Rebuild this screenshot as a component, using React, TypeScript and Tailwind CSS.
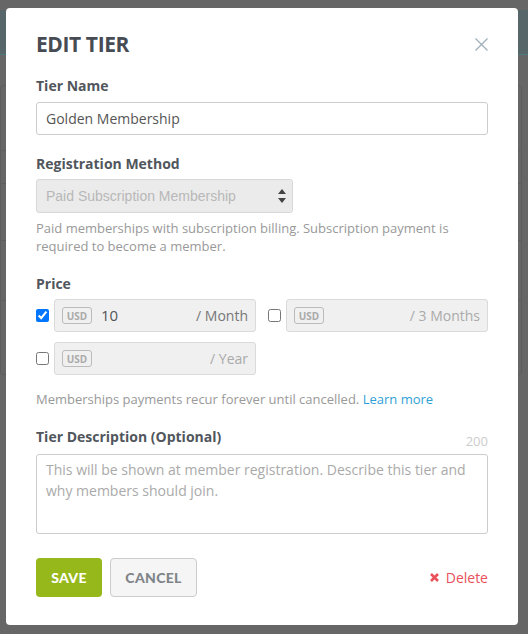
import React from "react";

function CloseIcon() {
  return (
    <svg width="13" height="13" viewBox="0 0 13 13" className="mt-[8px]">
      <path d="M0.5 0.5 L12.5 12.5 M12.5 0.5 L0.5 12.5" stroke="#9fb0ba" strokeWidth="1.3" fill="none" />
    </svg>
  );
}

function UpDown() {
  return (
    <svg width="8" height="14" viewBox="0 0 8 14">
      <path d="M4 0 L8 5 L0 5 Z" fill="#444" />
      <path d="M0 9 L8 9 L4 14 Z" fill="#444" />
    </svg>
  );
}

function PriceField({
  checked,
  value,
  unit,
  active,
}: {
  checked: boolean;
  value?: string;
  unit: string;
  active: boolean;
}) {
  return (
    <div className="flex items-center gap-[5px]">
      <input type="checkbox" defaultChecked={checked} className="m-0 h-[13px] w-[13px] shrink-0" />
      <div className="flex h-[33px] flex-1 items-center rounded-[3px] border border-[#dadada] bg-[#f0f0f0] pl-[7px] pr-[7px]">
        <div className="flex h-[17px] w-[30px] items-center justify-center rounded-[3px] border border-[#bbbbbb] text-[10px] font-bold leading-none text-[#aaaaaa]">
          USD
        </div>
        {value ? <span className="ml-[9px] text-[15px] text-[#555]">{value}</span> : null}
        <span className={"ml-auto text-[14px] " + (active ? "text-[#777]" : "text-[#aaaaaa]")}>{unit}</span>
      </div>
    </div>
  );
}

export default function App() {
  return (
    <div className="relative h-[634px] w-[528px] overflow-hidden bg-[#666666] font-['Open_Sans',sans-serif]">
      {/* page behind overlay */}
      <div className="pt-[10px]">
        <div className="h-[45px] border-b border-[#4f7980] bg-[#566669]" />
        <div className="mt-[30px] h-[290px] w-[522px] rounded-[3px] border border-[#5d5d5d]">
          <div className="h-[65px] border-b border-[#5d5d5d]" />
          <div className="h-[33px] border-b border-[#5d5d5d]" />
          <div className="h-[57px] border-b border-[#5d5d5d]" />
          <div className="h-[60px] border-b border-[#5d5d5d]" />
        </div>
      </div>

      {/* modal */}
      <div className="absolute left-[6px] top-[8px] h-[617px] w-[512px] rounded-[4px] bg-white px-[30px] pt-[22px]">
        <div className="flex items-start justify-between">
          <h2 className="text-[21px] font-bold leading-[28px] tracking-[-0.4px] text-[#474c54]">EDIT TIER</h2>
          <CloseIcon />
        </div>

        <div className="mt-[18px] text-[14px] font-bold leading-[20px] text-[#51565d]">Tier Name</div>
        <div className="mt-[6px] flex h-[33px] items-center rounded-[3px] border border-[#cccccc] px-[9px] text-[14px] text-[#555]">
          Golden Membership
        </div>

        <div className="mt-[19px] text-[14px] font-bold leading-[20px] text-[#51565d]">Registration Method</div>
        <div className="mt-[5px] flex h-[34px] w-[257px] items-center justify-between rounded-[3px] border border-[#d8d8d8] bg-[#ebebeb] pl-[9px] pr-[6px]">
          <span className="font-['Liberation_Sans',Arial,sans-serif] text-[14px] text-[#b8b8b8]">Paid Subscription Membership</span>
          <UpDown />
        </div>
        <p className="mt-[6px] text-[13px] leading-[18px] text-[#999999]">
          Paid memberships with subscription billing. Subscription payment is required to become a member.
        </p>

        <div className="mt-[19px] text-[14px] font-bold leading-[20px] text-[#51565d]">Price</div>
        <div className="mt-[5px] grid grid-cols-2 gap-x-[12px] gap-y-[10px]">
          <PriceField checked value="10" unit="/ Month" active />
          <PriceField checked={false} unit="/ 3 Months" active={false} />
          <PriceField checked={false} unit="/ Year" active={false} />
        </div>

        <p className="mt-[15px] text-[13px] leading-[18px] text-[#999999]">
          Memberships payments recur forever until cancelled. <span className="text-[#2f9fd8]">Learn more</span>
        </p>

        <div className="mt-[19px] flex items-end justify-between">
          <div className="text-[14px] font-bold leading-[20px] text-[#51565d]">Tier Description (Optional)</div>
          <div className="relative top-[3px] text-[13px] leading-[18px] text-[#cccccc]">200</div>
        </div>
        <div className="mt-[7px] h-[80px] rounded-[3px] border border-[#cccccc] px-[9px] pt-[4px] text-[14px] leading-[21px] text-[#aaaaaa]">
          This will be shown at member registration. Describe this tier and why members should join.
        </div>

        <div className="mt-[24px] flex items-center">
          <div className="flex h-[39px] w-[66px] items-center justify-center rounded-[4px] bg-[#97b81b] font-['Lato',sans-serif] text-[14px] font-black tracking-[0.3px] text-white">
            SAVE
          </div>
          <div className="ml-[8px] flex h-[39px] w-[87px] items-center justify-center rounded-[4px] border border-[#cccccc] bg-[#f5f5f5] font-['Lato',sans-serif] text-[14px] font-black tracking-[0.3px] text-[#80858a]">
            CANCEL
          </div>
          <div className="ml-auto flex items-center gap-[7px] text-[14px] text-[#e9505a]">
            <svg width="9" height="9" viewBox="0 0 9 9">
              <path d="M1 1 L8 8 M8 1 L1 8" stroke="#e9505a" strokeWidth="2.6" strokeLinecap="butt" />
            </svg>
            <span>Delete</span>
          </div>
        </div>
      </div>
    </div>
  );
}
